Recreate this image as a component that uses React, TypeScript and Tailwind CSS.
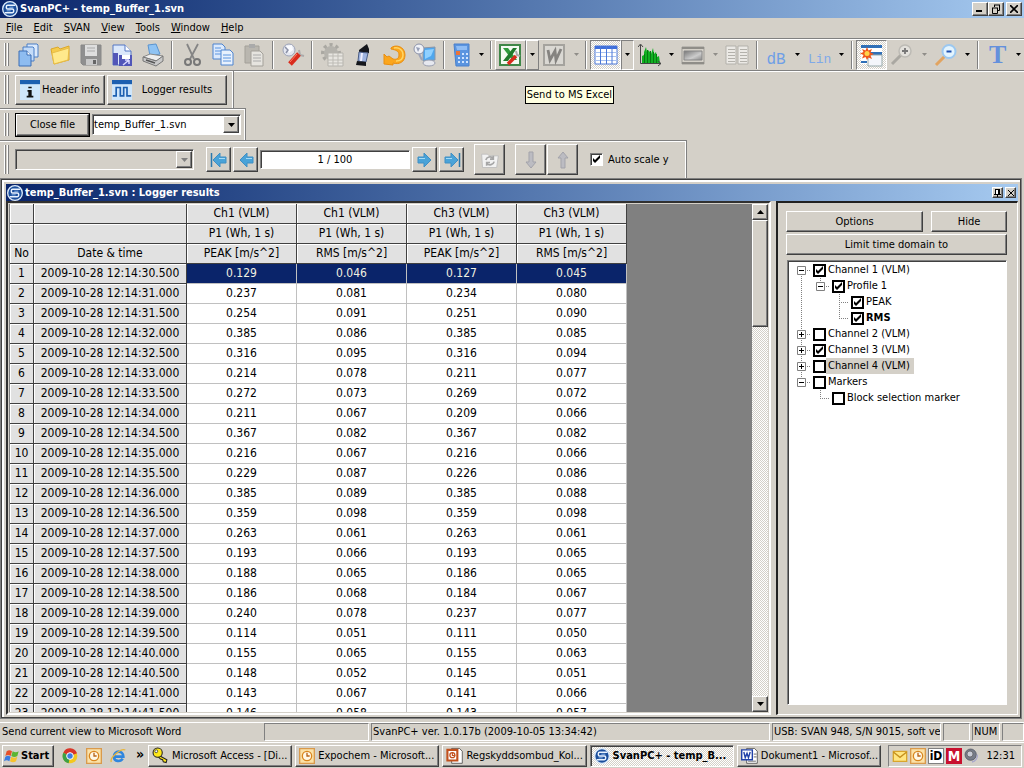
import React from 'react';
import clsx from 'clsx';

const RAISED = 'border border-t-white border-l-white border-r-[#404040] border-b-[#404040] bg-[#d4d0c8] shadow-[inset_-1px_-1px_0_#808080]';
const SUNKEN = 'border border-t-[#808080] border-l-[#808080] border-r-white border-b-white shadow-[inset_1px_1px_0_#404040]';
const DITHER = 'bg-[repeating-conic-gradient(#ffffff_0_25%,#d4d0c8_0_50%)] bg-[length:2px_2px]';
const TITLE = 'bg-linear-to-r from-[#0a246a] to-[#a6caf0]';

type Row = [string, string, string, string, string];

const ROWS: Row[] = [
    ['30.500', '0.129', '0.046', '0.127', '0.045'],
    ['31.000', '0.237', '0.081', '0.234', '0.080'],
    ['31.500', '0.254', '0.091', '0.251', '0.090'],
    ['32.000', '0.385', '0.086', '0.385', '0.085'],
    ['32.500', '0.316', '0.095', '0.316', '0.094'],
    ['33.000', '0.214', '0.078', '0.211', '0.077'],
    ['33.500', '0.272', '0.073', '0.269', '0.072'],
    ['34.000', '0.211', '0.067', '0.209', '0.066'],
    ['34.500', '0.367', '0.082', '0.367', '0.082'],
    ['35.000', '0.216', '0.067', '0.216', '0.066'],
    ['35.500', '0.229', '0.087', '0.226', '0.086'],
    ['36.000', '0.385', '0.089', '0.385', '0.088'],
    ['36.500', '0.359', '0.098', '0.359', '0.098'],
    ['37.000', '0.263', '0.061', '0.263', '0.061'],
    ['37.500', '0.193', '0.066', '0.193', '0.065'],
    ['38.000', '0.188', '0.065', '0.186', '0.065'],
    ['38.500', '0.186', '0.068', '0.184', '0.067'],
    ['39.000', '0.240', '0.078', '0.237', '0.077'],
    ['39.500', '0.114', '0.051', '0.111', '0.050'],
    ['40.000', '0.155', '0.065', '0.155', '0.063'],
    ['40.500', '0.148', '0.052', '0.145', '0.051'],
    ['41.000', '0.143', '0.067', '0.141', '0.066'],
    ['41.500', '0.146', '0.058', '0.143', '0.057'],
];

const HEADERS = [
    ['', '', 'Ch1 (VLM)', 'Ch1 (VLM)', 'Ch3 (VLM)', 'Ch3 (VLM)'],
    ['', '', 'P1 (Wh, 1 s)', 'P1 (Wh, 1 s)', 'P1 (Wh, 1 s)', 'P1 (Wh, 1 s)'],
    ['No', 'Date & time', 'PEAK [m/s^2]', 'RMS [m/s^2]', 'PEAK [m/s^2]', 'RMS [m/s^2]'],
];

const Svg = ({ size = 24, children }: { size?: number; children: React.ReactNode }) => (
    <svg width={size} height={size} viewBox="0 0 24 24" fill="none" className="shrink-0" aria-hidden="true">
        {children}
    </svg>
);

const Logo = ({ size = 16 }: { size?: number }) => (
    <Svg size={size}>
        <circle cx="12" cy="12" r="11" fill="#1c4f9c" stroke="#dcebfb" strokeWidth="2" />
        <path d="M20 6.500H8.500a2 2 0 0 0-2 2V10a2 2 0 0 0 2 2h7a2 2 0 0 1 2 2v1.500a2 2 0 0 1-2 2H4" stroke="#e8f2ff" strokeWidth="2.200" />
        <path d="M17 9.300h-6M13 14.800H7" stroke="#8fb9ec" strokeWidth="1.400" />
    </Svg>
);

const Triangle = ({ dim = false, up = false }: { dim?: boolean; up?: boolean }) => (
    <svg width="7" height="4" viewBox="0 0 7 4" className="shrink-0" aria-hidden="true">
        <path d={up ? 'M0 4h7L3.500 0z' : 'M0 0h7L3.500 4z'} fill={dim ? '#808080' : '#000'} />
    </svg>
);

/* toolbar drawings */
const icons = {
    pages: (
        <Svg>
            <path d="M10 1h10l1 1v12h-11z" fill="#dceafc" stroke="#4a7fc6" />
            <path d="M6 4h10l1 1v13H6z" fill="#c4dcf9" stroke="#4a7fc6" />
            <path d="M2 8h8l4 4v11H2z" fill="#8ebcf0" stroke="#3c6fb5" />
            <path d="M10 8v4h4" fill="#fff" stroke="#3c6fb5" />
        </Svg>
    ),
    folder: (
        <Svg>
            <path d="M3 6l7-2 2 2 9-3v14L6 21z" fill="#f5cb4c" stroke="#dba82c" />
            <path d="M4 10l17-5-1 12-14 4z" fill="#ffe98c" stroke="#e8bd48" />
        </Svg>
    ),
    save: (
        <Svg>
            <path d="M2 2h20v20H4l-2-2z" fill="#8f8f8f" stroke="#888" />
            <path d="M6 2h12v11H6z" fill="#dedede" />
            <path d="M8 5h8M8 8h8" stroke="#aaa" />
            <path d="M7 16h11v6H7z" fill="#c9c9c9" />
            <path d="M14 17h3v4h-3z" fill="#666" />
        </Svg>
    ),
    saveAs: (
        <Svg>
            <path d="M3 2h12l6 6v14H3z" fill="#dbe8fb" stroke="#5576c4" />
            <path d="M15 2v6h6" fill="#fff" stroke="#5576c4" />
            <path d="M3 10h5v12H3zM9 12h13v11H9z" fill="#5156b8" />
            <path d="M12 12h8v4h-8z" fill="#fff" />
            <path d="M13 22l6-5m0 0v4m0-4h-4" stroke="#d8d8ff" strokeWidth="1.500" />
        </Svg>
    ),
    print: (
        <Svg>
            <path d="M7 2l8-1 4 10-10 2z" fill="#8fc3f3" stroke="#5b94cf" />
            <path d="M2 14l7-3 13 2-6 5z" fill="#eee" stroke="#888" />
            <path d="M2 14v4l13 5 7-5v-5l-7 5z" fill="#c9c9c9" stroke="#777" />
            <path d="M5 17l9 3" stroke="#555" strokeWidth="1.500" />
        </Svg>
    ),
    cut: (
        <Svg>
            <path d="M7 1l7 15M18 1l-8 15" stroke="#858585" strokeWidth="1.800" />
            <circle cx="8" cy="19" r="3" stroke="#777" strokeWidth="2" />
            <circle cx="17" cy="19" r="3" stroke="#777" strokeWidth="2" />
        </Svg>
    ),
    copy: (
        <Svg>
            <path d="M2 1h9l3 3v12H2z" fill="#dbe9fc" stroke="#4c83cf" />
            <path d="M10 7h9l3 3v12H10z" fill="#e8f1fd" stroke="#4c83cf" />
            <path d="M4 5h6M4 8h6M4 11h6M12 12h8M12 15h8M12 18h8" stroke="#5b94e0" />
        </Svg>
    ),
    paste: (
        <Svg>
            <path d="M3 3h14v17H3z" fill="#b9b6af" stroke="#a3a099" />
            <path d="M7 1h6v4H7z" fill="#aaa" />
            <path d="M9 8h9l3 3v12H9z" fill="#e6e4df" stroke="#a3a099" />
            <path d="M11 12h8M11 15h8M11 18h8" stroke="#aaa" />
        </Svg>
    ),
    tools: (
        <Svg>
            <circle cx="8" cy="7" r="6" fill="#e4e7f0" stroke="#9da3b8" />
            <path d="M5 3l6-1 1 5-4 3z" fill="#fafbff" />
            <path d="M4 4l3 3-2 3" stroke="#8c92a8" strokeWidth="1.500" />
            <path d="M18 7l1 5 4 1" stroke="#aaa" strokeWidth="2" />
            <path d="M18 11L9 21" stroke="#d92b1c" strokeWidth="5" />
            <path d="M16 11l-7 8" stroke="#ff7b66" />
        </Svg>
    ),
    gear: (
        <Svg>
            <circle cx="11" cy="10" r="8" stroke="#aaa8a2" strokeWidth="4" strokeDasharray="3 3" />
            <circle cx="11" cy="10" r="7" fill="#b5b3ad" />
            <path d="M8 10h15v13H8z" fill="#e8e6e1" stroke="#b5b3ad" />
            <path d="M8 13h15M8 17h15M8 20h15M13 10v13M18 10v13" stroke="#bdbbb5" />
        </Svg>
    ),
    device: (
        <Svg>
            <path d="M8 7l8-6 2 5v4L8 9z" fill="#14161c" />
            <path d="M8 9l9 1-2 9-8-1z" fill="#9fb4e0" stroke="#4b5d85" />
            <path d="M11 10l-1 8" stroke="#eef" strokeWidth="2" />
            <path d="M6 18l9 1v4l-10-1z" fill="#14161c" />
        </Svg>
    ),
    undo: (
        <Svg>
            <path d="M9 5c4-4 14-2 14 7 0 7-6 10-12 8v2l-9-1 0-10 3 3c1 0 1-1 2-1l4 3c4 1 6-1 6-4 0-4-3-5-8-6z" fill="#fba61d" stroke="#e88e12" />
            <path d="M12 5c5-1 9 2 9 7 0 4-3 6-7 6" stroke="#ffd566" strokeWidth="1.500" />
        </Svg>
    ),
    computer: (
        <Svg>
            <path d="M10 5l12-1v13l-12 1z" fill="#4fa7ee" stroke="#8b96a8" />
            <path d="M12 7l9-1-3 7-6 3z" fill="#8fd0ff" />
            <circle cx="6" cy="6" r="5" fill="#f0f2f7" stroke="#8c92a8" />
            <path d="M3 4l4 1-2 4z" fill="#98a0b8" />
            <path d="M6 11l3 6" stroke="#9da3b8" strokeWidth="2" />
            <ellipse cx="16" cy="20" rx="6" ry="3" fill="#e6e8ef" stroke="#9a9fb0" />
        </Svg>
    ),
    calc: (
        <Svg>
            <path d="M4 1h15v22H6z" fill="#5b95e0" stroke="#4a80cc" />
            <path d="M6 3h11v4H7z" fill="#8fbdf5" />
            <path d="M8 11h10M8 15h10M8 19h10" stroke="#cfe4ff" strokeWidth="2" strokeDasharray="2 2" />
            <path d="M6 8h4v4H6z" fill="#e8743a" />
        </Svg>
    ),
    excel: (
        <Svg>
            <path d="M2 2h20v20H2z" fill="#f4faf2" stroke="#3f8748" strokeWidth="2" />
            <path d="M5 5h5l9 12h-5z" fill="#2f9a3c" />
            <path d="M19 5h-4L5 18h5z" fill="#1f7a2c" />
            <path d="M18 13l-8 8" stroke="#d92b1c" strokeWidth="3.500" />
            <path d="M18 8l1 4 3 1" stroke="#aaa" strokeWidth="2" />
        </Svg>
    ),
    word: (
        <Svg>
            <path d="M2 2h20v20H2z" fill="#dad8d3" stroke="#a5a39e" strokeWidth="2" />
            <path d="M6 7l2 10 5-9 1 9 5-11" stroke="#858380" strokeWidth="2.800" />
        </Svg>
    ),
    table: (
        <Svg>
            <path d="M1 3h22v18H1z" fill="#fff" stroke="#4c78d8" />
            <path d="M1 3h22v3H1z" fill="#3f6fdc" />
            <path d="M1 9.500h22M1 13.500h22M1 17.500h22" stroke="#a9c2f0" />
            <path d="M6.500 3v18M12.500 3v18M18 3v18" stroke="#4c78d8" />
        </Svg>
    ),
    bars: (
        <Svg>
            <path d="M2.500 2v18.500H23" stroke="#444" />
            <path d="M4 20v-7l2-1V9l2-5 1 5 1-2 2 2 1 2 2-6 1 6 2-2 1 5 2-1 1 7z" fill="#12b022" />
            <path d="M6.500 11v9M9.500 7v13M12.500 8v12M15.500 9v11M18.500 11v9" stroke="#077a12" />
            <path d="M0 4l2.500-3L5 4M20 18l3 2.500-3 2.500" stroke="#444" />
        </Svg>
    ),
    spectro: (
        <Svg>
            <defs>
                <linearGradient id="spectroFill" x1="0" y1="0" x2="1" y2="1">
                    <stop offset="0" stopColor="#777" />
                    <stop offset=".6" stopColor="#ccc" />
                    <stop offset="1" stopColor="#888" />
                </linearGradient>
            </defs>
            <path d="M1 4h22v17H1z" fill="#d4d0c8" stroke="#9f9d98" />
            <path d="M1 5h22M1 20h22" stroke="#8f8d88" strokeWidth="2" />
            <path d="M3 8h18v9H3z" fill="url(#spectroFill)" stroke="#888" />
        </Svg>
    ),
    list: (
        <Svg>
            <path d="M1 3h10v18H1zM13 3h10v18H13z" fill="#eceae6" stroke="#b3b1ab" />
            <path d="M3 6.500h7M3 9.500h7M3 12.500h7M3 15.500h7M3 18.500h7M15 6.500h7M15 9.500h7M15 12.500h7M15 15.500h7M15 18.500h7" stroke="#b3b1ab" />
        </Svg>
    ),
    windowNew: (
        <Svg>
            <path d="M2 2h21v19H2z" fill="#fff" />
            <path d="M2 2h21v3H2z" fill="#2f6fb8" />
            <path d="M11 9h12v3H11z" fill="#2f6fb8" />
            <path d="M9 12h14v11H9z" fill="#f4f6fb" stroke="#9aa" />
            <path d="M2 19h6" stroke="#2f6fb8" strokeWidth="2" />
            <path d="M8 4l1.500 3.500L13 6l-1.500 3.500L15 11l-3.500 1.500L13 16l-3.500-1.500L8 17l-1.500-3L3 15.500l1.500-3.500L1 10.500 4.500 9 3 6l3.500 1.500z" fill="#f0571c" />
            <circle cx="8" cy="10.500" r="2.500" fill="#ffd34a" />
        </Svg>
    ),
    zoomIn: (
        <Svg>
            <path d="M11 12L2 21" stroke="#aaa8a2" strokeWidth="3" />
            <circle cx="15" cy="8" r="6" fill="#e3e1dc" stroke="#bdbbb5" strokeWidth="1.500" />
            <path d="M12 8h6M15 5v6" stroke="#777" strokeWidth="1.800" />
        </Svg>
    ),
    zoomOut: (
        <Svg>
            <path d="M11 13L2 22" stroke="#e2a460" strokeWidth="3" />
            <circle cx="15" cy="8.500" r="6.500" fill="#e3f4fe" stroke="#9cc8f0" strokeWidth="2" />
            <path d="M12.500 8.500h5" stroke="#1d4fb0" strokeWidth="2" />
        </Svg>
    ),
};

const ToolButton = ({ label, children, state = 'flat', wide = true }: { label: string; children: React.ReactNode; state?: 'flat' | 'up' | 'down'; wide?: boolean }) => (
    <button
        aria-label={label}
        className={clsx(
            'flex h-[30px] shrink-0 items-center justify-center',
            wide ? 'w-[31px]' : 'w-7',
            state === 'up' && 'border border-t-white border-l-white border-r-[#808080] border-b-[#808080]',
            state === 'down' && ['border border-t-[#808080] border-l-[#808080] border-r-white border-b-white', DITHER],
        )}
    >
        {children}
    </button>
);

const DropArrow = ({ label, dim = false, state = 'flat', narrow = false }: { label: string; dim?: boolean; state?: 'flat' | 'up' | 'down'; narrow?: boolean }) => (
    <button
        aria-label={label}
        className={clsx(
            'flex h-[30px] items-center justify-center',
            narrow ? 'w-[11px]' : 'w-[13px]',
            state === 'up' && 'border border-t-white border-l-white border-r-[#808080] border-b-[#808080]',
            state === 'down' && 'border border-t-[#808080] border-l-[#808080] border-r-white border-b-white',
        )}
    >
        <svg width="5" height="3" viewBox="0 0 5 3" className="shrink-0" aria-hidden="true">
            <path d="M0 0h5L2.500 3z" fill={dim ? '#8f8d88' : '#000'} />
        </svg>
    </button>
);

const Sep = () => (
    <div className="flex w-2 shrink-0 justify-center">
        <div className="h-7 w-[2px] border-l border-[#808080] bg-white" />
    </div>
);

const Grip = () => (
    <div className="mr-1 ml-1 flex shrink-0 gap-px self-stretch py-1">
        <div className="w-[2px] border-l border-white bg-[#808080]" />
        <div className="w-[2px] border-l border-white bg-[#808080]" />
    </div>
);

const Band = ({ children, className }: { children: React.ReactNode; className?: string }) => (
    <div className={clsx('flex w-fit items-center border-t border-r border-[#808080] shadow-[inset_-1px_1px_0_#ffffff]', className)}>
        <Grip />
        {children}
    </div>
);

const Check = ({ id, checked, heavy = false }: { id: string; checked?: boolean; heavy?: boolean }) => (
    <span className="relative block size-[13px] shrink-0">
        <input
            id={id}
            type="checkbox"
            defaultChecked={checked}
            className={clsx('peer block size-[13px] appearance-none bg-white', heavy ? 'border-2 border-black' : SUNKEN)}
        />
        <svg viewBox="0 0 13 13" className="pointer-events-none absolute inset-0 hidden peer-checked:block" aria-hidden="true">
            <path d="M3 5v3l2 2 5-5V2L5 7z" fill="#000" />
        </svg>
    </span>
);

const BlueArrow = ({ flip = false, bar = false }: { flip?: boolean; bar?: boolean }) => (
    <svg width="18" height="18" viewBox="0 0 18 18" className={clsx(flip && '-scale-x-100')} aria-hidden="true">
        <path d="M2 6h6V2l7 7-7 7v-4H2z" fill="#4aa3d8" stroke="#3f8fc4" />
        <path d="M3 7.500h6" stroke="#a5dbf7" />
        {bar && <path d="M16.500 2v14" stroke="#2b78ad" strokeWidth="1.500" />}
    </svg>
);

const GreyArrow = ({ up = false }: { up?: boolean }) => (
    <svg width="18" height="18" viewBox="0 0 18 18" className={clsx(up && '-scale-y-100')} aria-hidden="true">
        <path d="M7 1h4v10h3l-5 6-5-6h3z" fill="#bcbcc2" stroke="#a3a3aa" />
    </svg>
);

const TitleBar = () => (
    <header className={clsx('flex h-[18px] shrink-0 items-center pr-[2px] pl-[2px] text-white', TITLE)}>
        <Logo />
        <h1 className="ml-[2px] text-[11px] leading-4 font-bold">SvanPC+ - temp_Buffer_1.svn</h1>
        <div className="ml-auto flex">
            <button aria-label="Minimize" className={clsx('flex h-[14px] w-4 items-end p-[3px]', RAISED)}>
                <span className="block h-[2px] w-[6px] bg-black" />
            </button>
            <button aria-label="Restore" className={clsx('flex h-[14px] w-4 items-center justify-center', RAISED)}>
                <svg width="10" height="10" viewBox="0 0 10 10" fill="none" stroke="#000" aria-hidden="true">
                    <path d="M3 1h6M3.500 1v2M8.500 1v5.500H7M1 4h6M1.500 4v5.500h5V4" />
                </svg>
            </button>
            <button aria-label="Close" className={clsx('ml-[2px] flex h-[14px] w-4 items-center justify-center', RAISED)}>
                <svg width="8" height="8" viewBox="0 0 8 8" stroke="#000" strokeWidth="1.600" aria-hidden="true">
                    <path d="M0 0l8 8M8 0L0 8" />
                </svg>
            </button>
        </div>
    </header>
);

const MENU = ['File', 'Edit', 'SVAN', 'View', 'Tools', 'Window', 'Help'];

const MenuBar = () => (
    <nav className="flex h-5 shrink-0 items-center gap-[11px] pl-[6px]">
        {MENU.map((m) => (
            <button key={m}>
                <span className="underline">{m[0]}</span>
                {m.slice(1)}
            </button>
        ))}
    </nav>
);

const MainToolbar = () => (
    <div className="flex h-8 shrink-0 items-center border-t border-[#808080] shadow-[inset_0_1px_0_#ffffff]">
        <Grip />
        <ToolButton label="New">{icons.pages}</ToolButton>
        <ToolButton label="Open">{icons.folder}</ToolButton>
        <ToolButton label="Save">{icons.save}</ToolButton>
        <ToolButton label="Save as">{icons.saveAs}</ToolButton>
        <ToolButton label="Print">{icons.print}</ToolButton>
        <Sep />
        <ToolButton label="Cut">{icons.cut}</ToolButton>
        <ToolButton label="Copy">{icons.copy}</ToolButton>
        <ToolButton label="Paste">{icons.paste}</ToolButton>
        <Sep />
        <ToolButton label="Settings">{icons.tools}</ToolButton>
        <Sep />
        <ToolButton label="Setup">{icons.gear}</ToolButton>
        <ToolButton label="Instrument">{icons.device}</ToolButton>
        <ToolButton label="Reload">{icons.undo}</ToolButton>
        <ToolButton label="Remote">{icons.computer}</ToolButton>
        <Sep />
        <ToolButton label="Calculator" wide={false}>{icons.calc}</ToolButton>
        <DropArrow label="Calculator menu" narrow />
        <Sep />
        <div className="relative flex">
            <ToolButton label="Excel" state="up">{icons.excel}</ToolButton>
            <DropArrow label="Excel menu" state="up" />
            <div role="tooltip" className="absolute top-[46px] left-[30px] z-10 border border-black bg-[#ffffe1] px-px leading-4 whitespace-nowrap">
                Send to MS Excel
            </div>
        </div>
        <ToolButton label="Word">{icons.word}</ToolButton>
        <DropArrow label="Word menu" dim />
        <Sep />
        <ToolButton label="Table" state="down">{icons.table}</ToolButton>
        <DropArrow label="Table menu" state="down" />
        <ToolButton label="Spectrum">{icons.bars}</ToolButton>
        <DropArrow label="Spectrum menu" />
        <ToolButton label="Spectrogram">{icons.spectro}</ToolButton>
        <DropArrow label="Spectrogram menu" dim />
        <ToolButton label="List">{icons.list}</ToolButton>
        <Sep />
        <ToolButton label="Decibels">
            <span className="pt-[10px] font-['Liberation_Mono',monospace] text-[16px] leading-4 text-[#6f9fe6]">dB</span>
        </ToolButton>
        <DropArrow label="Decibels menu" />
        <ToolButton label="Linear">
            <span className="pt-[10px] font-['Liberation_Mono',monospace] text-[13px] leading-4 text-[#7fa9e8]">Lin</span>
        </ToolButton>
        <DropArrow label="Linear menu" />
        <Sep />
        <ToolButton label="New view" state="down">{icons.windowNew}</ToolButton>
        <ToolButton label="Zoom in">{icons.zoomIn}</ToolButton>
        <DropArrow label="Zoom in menu" dim />
        <ToolButton label="Zoom out">{icons.zoomOut}</ToolButton>
        <DropArrow label="Zoom out menu" />
        <Sep />
        <ToolButton label="Text">
            <span className="font-['Liberation_Serif',serif] text-[26px] leading-7 font-bold text-[#6490dc]">T</span>
        </ToolButton>
        <DropArrow label="Text menu" narrow />
    </div>
);

const FileBands = () => (
    <>
        <div className="h-[38px] shrink-0 border-t border-[#808080] shadow-[inset_0_1px_0_#ffffff]">
            <div className="flex h-[37px] w-fit items-center border-r border-[#808080] pr-[6px] shadow-[inset_-1px_0_0_#ffffff]">
                <Grip />
                <button className={clsx('ml-[2px] flex h-[30px] w-[90px] items-center gap-[2px] pl-1 whitespace-nowrap', RAISED)}>
                    <Svg size={20}>
                        <path d="M0 0h24v24H0z" fill="#cfe6fb" />
                        <path d="M0 0h24v5H0z" fill="#1c5fb0" />
                        <path d="M10 8h4v2h-4zM9 12h5v7h2v2H8v-2h2v-5H9z" fill="#111" />
                    </Svg>
                    Header info
                </button>
                <button className={clsx('ml-[2px] flex h-[30px] w-[120px] items-center px-1', RAISED)}>
                    <Svg size={20}>
                        <path d="M0 0h24v24H0z" fill="#cfe6fb" />
                        <path d="M0 0h24v5H0z" fill="#1c5fb0" />
                        <path d="M1 19h4V9h5v10h4V9h4v10h5" stroke="#1c5fb0" strokeWidth="2" />
                    </Svg>
                    <span className="flex-1 text-center">Logger results</span>
                </button>
            </div>
        </div>
        <Band className="h-8 shrink-0 pr-1">
            <button className="ml-[2px] h-6 w-[75px] border border-black">
                <span className={clsx('flex h-full items-center justify-center', RAISED)}>Close file</span>
            </button>
            <div className={clsx('relative ml-[2px] h-[21px] w-[149px] bg-white', SUNKEN)}>
                <select aria-label="File" className="h-full w-full appearance-none pl-px">
                    <option>temp_Buffer_1.svn</option>
                </select>
                <span className={clsx('pointer-events-none absolute top-px right-px bottom-px flex w-4 items-center justify-center', RAISED)}>
                    <Triangle />
                </span>
            </div>
        </Band>
        <Band className="h-[38px] shrink-0 pr-[17px]">
            <div className={clsx('relative ml-[2px] h-[21px] w-[179px]', SUNKEN)}>
                <select aria-label="Series" disabled className="h-full w-full appearance-none" />
                <span className={clsx('pointer-events-none absolute top-px right-px bottom-px flex w-4 items-center justify-center', RAISED)}>
                    <Triangle dim />
                </span>
            </div>
            <div className="ml-3 flex items-center gap-[2px]">
                <button aria-label="First" className={clsx('flex size-[25px] items-center justify-center', RAISED)}><BlueArrow flip bar /></button>
                <button aria-label="Previous" className={clsx('flex size-[25px] items-center justify-center', RAISED)}><BlueArrow flip /></button>
                <input aria-label="Position" defaultValue="1 / 100" className={clsx('h-[19px] w-[150px] bg-white text-center', SUNKEN)} />
                <button aria-label="Next" className={clsx('flex size-[25px] items-center justify-center', RAISED)}><BlueArrow /></button>
                <button aria-label="Last" className={clsx('flex size-[25px] items-center justify-center', RAISED)}><BlueArrow bar /></button>
            </div>
            <button aria-label="Refresh" className={clsx('ml-[10px] flex size-[31px] items-center justify-center', RAISED)}>
                <Svg size={20}>
                    <path d="M2 5h7l2 2h11l-2 14H3z" fill="#f2f2f2" stroke="#bbb" />
                    <path d="M7 12c1-4 6-5 9-2m0-3v4h-4M17 14c-1 4-6 5-9 2m0 3v-4h4" stroke="#a5a5a5" strokeWidth="2" />
                </Svg>
            </button>
            <button aria-label="Down" className={clsx('ml-[10px] flex size-[31px] items-center justify-center', RAISED)}><GreyArrow /></button>
            <button aria-label="Up" className={clsx('ml-px flex size-[31px] items-center justify-center', RAISED)}><GreyArrow up /></button>
            <div className="ml-3 flex items-center gap-[5px]">
                <Check id="autoscale" checked />
                <label htmlFor="autoscale">Auto scale y</label>
            </div>
        </Band>
    </>
);

const HEAD_CELL = 'h-5 border-r border-b border-[#404040] bg-[#e1e1e1] p-0 text-center font-normal shadow-[inset_1px_1px_0_#ffffff]';

const ResultsTable = () => (
    <table className="w-[617px] table-fixed border-separate border-spacing-0 text-[12px] leading-[19px]">
        <colgroup>
            <col className="w-6" />
            <col className="w-[153px]" />
            <col />
            <col />
            <col />
            <col />
        </colgroup>
        <thead>
            {HEADERS.map((cells, r) => (
                <tr key={r}>
                    {cells.map((c, i) => (
                        <th key={i} className={HEAD_CELL}>{c}</th>
                    ))}
                </tr>
            ))}
        </thead>
        <tbody>
            {ROWS.map(([time, ...values], r) => (
                <tr key={time} className={r === 0 ? 'bg-[#0a246a] text-[#f0f0e0]' : 'bg-white'}>
                    <th className={clsx(HEAD_CELL, 'text-black')}>{r + 1}</th>
                    <th className={clsx(HEAD_CELL, 'text-black')}>2009-10-28 12:14:{time}</th>
                    {values.map((v, i) => (
                        <td key={i} className="h-5 border-r border-b border-[#c0c0c0] p-0 text-center">{v}</td>
                    ))}
                </tr>
            ))}
        </tbody>
    </table>
);

const ScrollBar = () => (
    <div className={clsx('flex w-4 shrink-0 flex-col', DITHER)}>
        <button aria-label="Scroll up" className={clsx('flex h-4 items-center justify-center', RAISED)}><Triangle up /></button>
        <div className={clsx('h-[107px]', RAISED)} />
        <button aria-label="Scroll down" className={clsx('mt-auto flex h-4 items-center justify-center', RAISED)}><Triangle /></button>
    </div>
);

type Cell = 'blank' | 'line' | 'tee' | 'end' | 'minusTop' | 'minus' | 'minusEnd' | 'plus';

const TREE: { label: string; cells: Cell[]; checked?: boolean; bold?: boolean; selected?: boolean }[] = [
    { label: 'Channel 1 (VLM)', cells: ['minusTop'], checked: true },
    { label: 'Profile 1', cells: ['line', 'minusEnd'], checked: true },
    { label: 'PEAK', cells: ['line', 'blank', 'tee'], checked: true },
    { label: 'RMS', cells: ['line', 'blank', 'end'], checked: true, bold: true },
    { label: 'Channel 2 (VLM)', cells: ['plus'] },
    { label: 'Channel 3 (VLM)', cells: ['plus'], checked: true },
    { label: 'Channel 4 (VLM)', cells: ['plus'], selected: true },
    { label: 'Markers', cells: ['minusEnd'] },
    { label: 'Block selection marker', cells: ['blank', 'end'] },
];

const TreeCell = ({ kind }: { kind: Cell }) => {
    const box = kind.startsWith('minus') || kind === 'plus';
    const up = kind !== 'blank' && kind !== 'minusTop';
    const down = ['line', 'tee', 'minusTop', 'minus', 'plus'].includes(kind);
    return (
        <svg width="19" height="16" viewBox="0 0 19 16" className="shrink-0" fill="none" aria-hidden="true">
            <g stroke="#808080" strokeDasharray="1 1">
                {up && <path d="M9.500 0v8" />}
                {down && <path d="M9.500 8v8" />}
                {kind !== 'blank' && kind !== 'line' && <path d="M9 8.500h9" />}
            </g>
            {box && <path d="M5.500 4.500h8v8h-8z" fill="#fff" stroke="#808080" />}
            {box && <path d="M7 8.500h5" stroke="#000" />}
            {kind === 'plus' && <path d="M9.500 6v5" stroke="#000" />}
        </svg>
    );
};

const SidePanel = () => (
    <aside className="flex w-[242px] shrink-0 flex-col border-t-2 border-r border-b border-l-2 border-t-[#202020] border-r-white border-b-white border-l-[#202020] px-2 pt-2 pb-[9px]">
        <div className="flex gap-2 pr-[2px]">
            <button className={clsx('h-[21px] flex-1', RAISED)}>Options</button>
            <button className={clsx('h-[21px] w-[76px]', RAISED)}>Hide</button>
        </div>
        <div className="mt-[2px] mb-[5px] flex pr-[2px]">
            <button className={clsx('h-[21px] flex-1', RAISED)}>Limit time domain to</button>
        </div>
        <ul className={clsx('mr-[2px] ml-px flex-1 bg-white pt-px pl-1', SUNKEN)}>
            {TREE.map((n, i) => (
                <li key={n.label} className="flex h-4 items-center">
                    {n.cells.map((c, k) => (
                        <TreeCell key={k} kind={c} />
                    ))}
                    <span className="ml-[2px]">
                        <Check id={`node-${i}`} checked={n.checked} heavy />
                    </span>
                    <label
                        htmlFor={`node-${i}`}
                        className={clsx('pr-1 pl-[2px] leading-4', n.bold && 'font-bold', n.selected && 'bg-[#d4d0c8]')}
                    >
                        {n.label}
                    </label>
                </li>
            ))}
        </ul>
    </aside>
);

const LoggerWindow = () => (
    <section className="mr-[2px] flex min-h-0 flex-1 flex-col border border-[#808080] pt-[5px] pr-[3px] pb-[3px] pl-[5px] shadow-[inset_1px_1px_0_#404040,inset_-1px_-1px_0_#404040,inset_3px_3px_0_#ffffff]">
        <div className={clsx('flex h-[17px] shrink-0 items-center text-white', TITLE)}>
            <span className="ml-px"><Logo /></span>
            <h2 className="ml-[2px] font-bold">temp_Buffer_1.svn : Logger results</h2>
            <div className="ml-auto flex gap-[2px] pr-[2px]">
                <button aria-label="Pin" className={clsx('flex size-[11px] items-center justify-center', RAISED)}>
                    <svg width="7" height="8" viewBox="0 0 7 8" aria-hidden="true">
                        <path d="M1 0h5v5h1v1H4v2H3V6H0V5h1z" fill="#000" />
                        <path d="M2 1h2v4H2z" fill="#fff" />
                    </svg>
                </button>
                <button aria-label="Close panel" className={clsx('flex size-[11px] items-center justify-center', RAISED)}>
                    <svg width="6" height="6" viewBox="0 0 6 6" stroke="#000" aria-hidden="true">
                        <path d="M0 0l6 6M6 0L0 6" />
                    </svg>
                </button>
            </div>
        </div>
        <div className="flex min-h-0 flex-1 gap-[5px]">
            <div className="flex min-w-0 flex-1 border-2 border-t-[#303030] border-r-white border-b-white border-l-[#303030] p-px">
                <div className="min-w-0 flex-1 overflow-hidden bg-[#808080] pl-px">
                    <ResultsTable />
                </div>
                <ScrollBar />
            </div>
            <SidePanel />
        </div>
    </section>
);

const PANE = 'flex h-[18px] items-center overflow-hidden border border-t-[#808080] border-l-[#808080] border-r-white border-b-white pl-px whitespace-nowrap';

const StatusBar = () => (
    <footer className="mt-[3px] flex h-5 shrink-0 gap-[2px] border-t border-white pb-px">
        <div className="flex w-[262px] items-center pl-[2px]">Send current view to Microsoft Word</div>
        <div className={clsx('w-[105px]', PANE)} />
        <div className={clsx('flex-1', PANE)}>SvanPC+ ver. 1.0.17b (2009-10-05 13:34:42)</div>
        <div className={clsx('w-[169px]', PANE)}>USB: SVAN 948, S/N 9015, soft ve</div>
        <div className={clsx('w-[27px]', PANE)} />
        <div className={clsx('w-[28px]', PANE)}>NUM</div>
        <div className={clsx('w-[22px]', PANE)} />
    </footer>
);

const Outlook = ({ size = 16 }: { size?: number }) => (
    <Svg size={size}>
        <path d="M1 1h22v22H1z" fill="#fbe2a8" stroke="#d99a4c" strokeWidth="2" />
        <circle cx="12" cy="12" r="7" fill="#fff8e6" stroke="#d8861f" strokeWidth="2" />
        <path d="M12 7v5h4" stroke="#b8641a" strokeWidth="2" />
    </Svg>
);

const TASKS = [
    {
        name: 'Microsoft Access - [Di...',
        icon: (
            <Svg size={17}>
                <path d="M10 12l11 6-1 4-4-1-1-3-3-1-4-4z" fill="#ffe81a" stroke="#222" strokeWidth="1.500" />
                <circle cx="8" cy="8" r="6.500" fill="#ffe81a" stroke="#222" strokeWidth="1.500" />
                <circle cx="6" cy="6" r="2" fill="#fff" stroke="#222" />
            </Svg>
        ),
    },
    { name: 'Expochem - Microsoft...', icon: <Outlook /> },
    {
        name: 'Regskyddsombud_Kol...',
        icon: (
            <Svg size={17}>
                <path d="M8 2h11l4 4v17H8z" fill="#fff" stroke="#333" />
                <path d="M2 4h14v15H2z" fill="#fff" stroke="#c2501c" strokeWidth="3" />
                <circle cx="9" cy="11.500" r="3.500" stroke="#c2501c" strokeWidth="1.800" />
                <path d="M9 8v4h4" stroke="#c2501c" strokeWidth="1.500" />
            </Svg>
        ),
    },
    { name: 'SvanPC+ - temp_B...', icon: <Logo />, active: true },
    {
        name: 'Dokument1 - Microsof...',
        icon: (
            <Svg size={17}>
                <path d="M8 2h11l4 4v17H8z" fill="#fff" stroke="#333" />
                <path d="M18 10h4M18 14h4M10 20h11" stroke="#333" />
                <path d="M1 4h15v14H1z" fill="#fff" stroke="#2242a8" strokeWidth="2" />
                <path d="M4 7l2 8 2.500-6 2 6L13 7" stroke="#2242a8" strokeWidth="2" />
            </Svg>
        ),
    },
];

const TaskBar = () => (
    <div className="flex h-[26px] shrink-0 items-center border-t border-white px-[2px]">
        <button className={clsx('flex h-[22px] w-[52px] items-center gap-px pl-px font-bold', RAISED)}>
            <Svg size={16}>
                <path d="M4 5c3-2 5-2 8 0l-2 7c-3-2-5-2-8 0z" fill="#e6502a" />
                <path d="M13 5c3 2 6 2 9 0l-2 7c-3 2-6 2-9 0z" fill="#5cb531" />
                <path d="M2 13c3-2 5-2 8 0l-2 7c-3-2-5-2-8 0z" fill="#3b7be0" />
                <path d="M11 13c3 2 6 2 9 0l-2 7c-3 2-6 2-9 0z" fill="#f6c22c" />
            </Svg>
            Start
        </button>
        <div className="ml-2 flex items-center gap-2">
            <button aria-label="Chrome">
                <Svg size={16}>
                    <circle cx="12" cy="12" r="11" fill="#f4c81e" />
                    <path d="M12 12L2 7A11 11 0 0 1 22.500 8z" fill="#d8352a" />
                    <path d="M12 12L2 7a11 11 0 0 0 8 16z" fill="#3fa045" />
                    <circle cx="12" cy="12" r="5" fill="#3f7fe0" stroke="#fff" strokeWidth="1.500" />
                </Svg>
            </button>
            <button aria-label="Outlook"><Outlook /></button>
            <button aria-label="Internet Explorer">
                <Svg size={16}>
                    <path d="M5 13h15c0-10-14-10-14 0 0 8 10 8 13 3" stroke="#2f86de" strokeWidth="4" />
                    <path d="M2 21C-1 15 16 0 23 3" stroke="#e8b53a" strokeWidth="2" />
                </Svg>
            </button>
            <button aria-label="More" className="flex w-3 justify-center pb-1 text-[14px] leading-4 font-bold">»</button>
        </div>
        <div className="ml-[2px] flex min-w-0 flex-1 gap-[3px]">
            {TASKS.map((t) => (
                <button
                    key={t.name}
                    className={clsx(
                        'flex h-[22px] min-w-0 flex-1 items-center gap-[3px] overflow-hidden px-[3px] whitespace-nowrap',
                        t.active ? ['font-bold', SUNKEN, DITHER] : RAISED,
                    )}
                >
                    {t.icon}
                    {t.name}
                </button>
            ))}
        </div>
        <div className="ml-[7px] flex h-[22px] w-[134px] items-center gap-[2px] border border-t-[#808080] border-l-[#808080] border-r-white border-b-white pl-[3px]">
            <Svg size={16}>
                <path d="M2 5h20v15H2z" fill="#ffe680" stroke="#d8a52c" strokeWidth="2" />
                <path d="M2 6l10 8 10-8" stroke="#c58f1c" strokeWidth="2" />
            </Svg>
            <Outlook />
            <span className="flex size-4 items-center justify-center border border-[#808080] bg-white text-[12px] leading-3 font-bold">iD</span>
            <span className="flex size-4 items-center justify-center bg-[#c8102e] text-[14px] leading-3 font-bold text-white">M</span>
            <Svg size={16}>
                <circle cx="10" cy="10" r="8.500" fill="#777c88" stroke="#444a58" />
                <circle cx="9" cy="9" r="4.500" fill="#c9ccd6" stroke="#555" />
                <path d="M20 10c1 5-3 10-8 11" stroke="#a9a9cc" strokeWidth="2" />
            </Svg>
            <span className="mr-[6px] ml-auto">12:31</span>
        </div>
    </div>
);

export default function App() {
    return (
        <div className="flex h-screen w-full flex-col overflow-hidden bg-[#d4d0c8] font-['DejaVu_Sans_Condensed','DejaVu_Sans',sans-serif] text-[11px] leading-[14px] text-black">
            <TitleBar />
            <MenuBar />
            <MainToolbar />
            <FileBands />
            <LoggerWindow />
            <StatusBar />
            <TaskBar />
        </div>
    );
}
